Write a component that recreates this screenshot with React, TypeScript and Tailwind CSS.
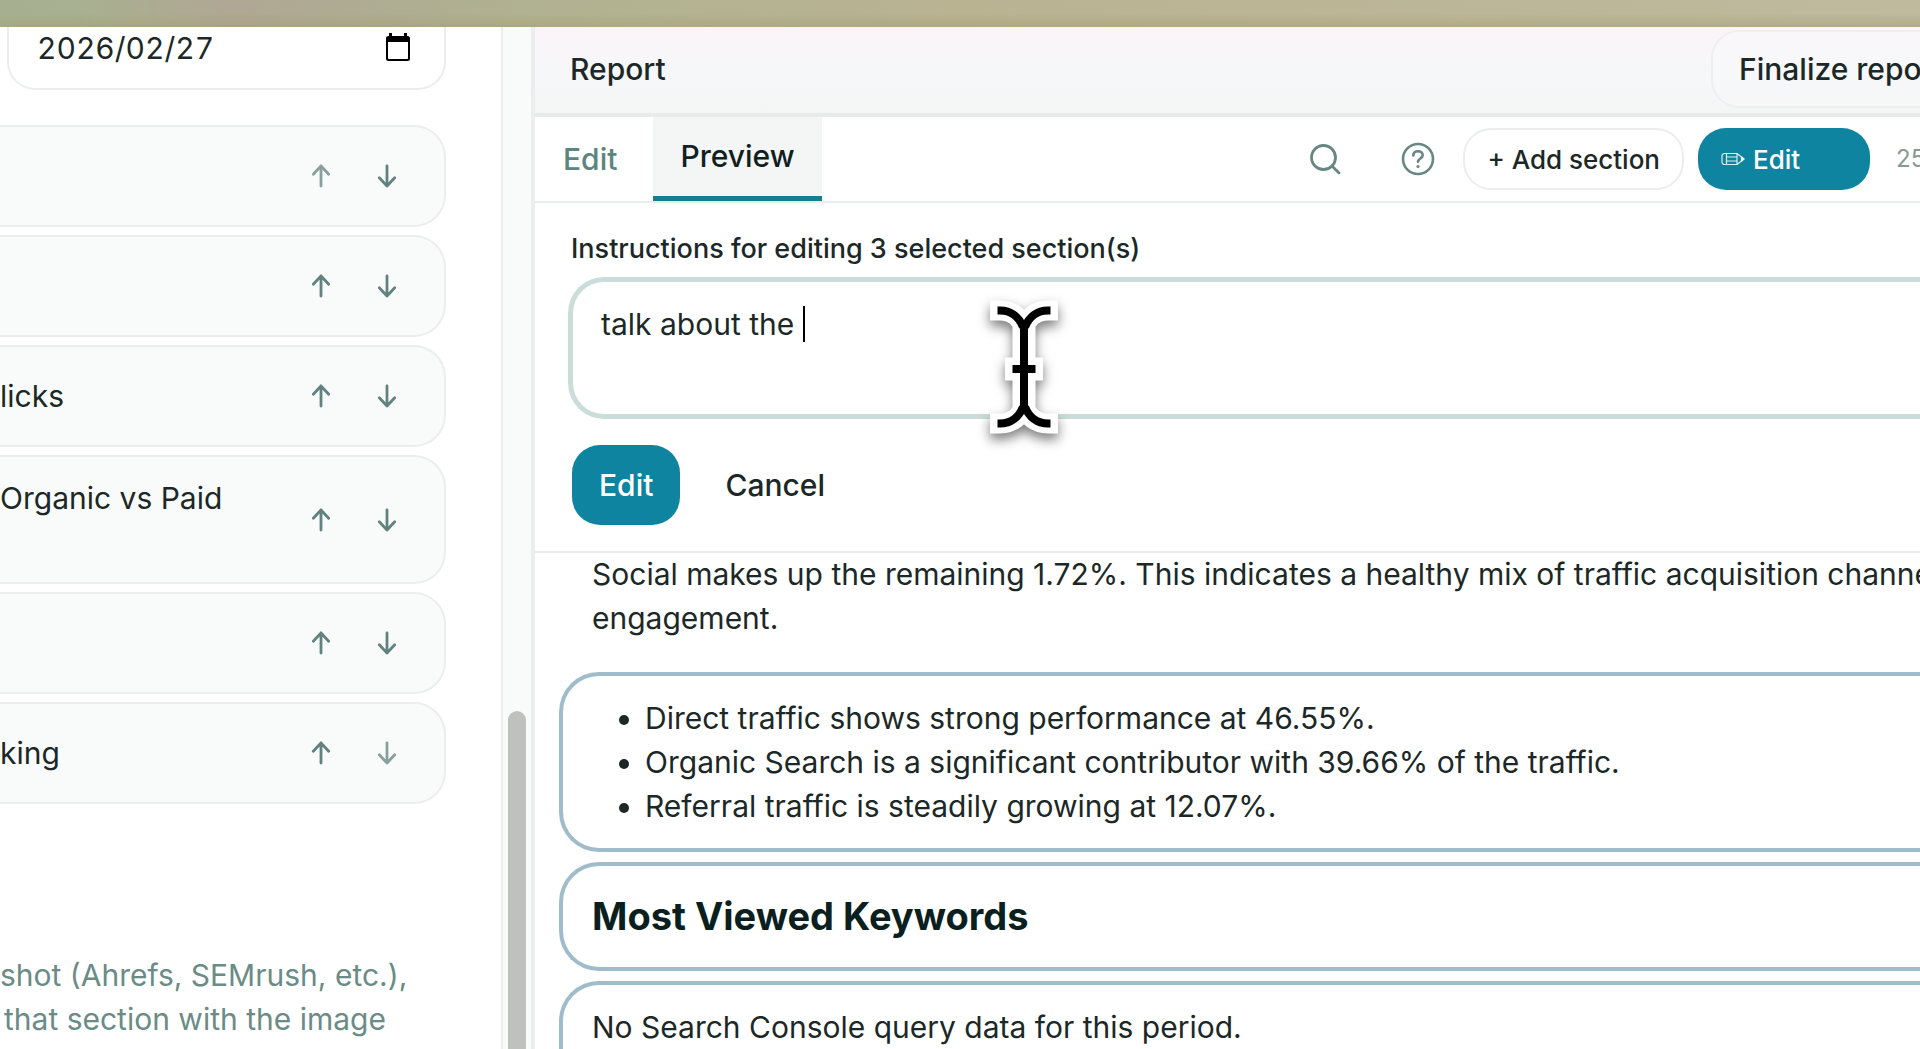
import { useState } from "react";
import clsx from "clsx";

const sections = [
  { id: 1, title: "", tall: false, upDisabled: true, downDisabled: false },
  { id: 2, title: "", tall: false, upDisabled: false, downDisabled: false },
  { id: 3, title: "licks", tall: false, upDisabled: false, downDisabled: false },
  { id: 4, title: "Organic vs Paid", tall: true, upDisabled: false, downDisabled: false },
  { id: 5, title: "", tall: false, upDisabled: false, downDisabled: false },
  { id: 6, title: "king", tall: false, upDisabled: false, downDisabled: true },
];

const highlights = [
  "Direct traffic shows strong performance at 46.55%.",
  "Organic Search is a significant contributor with 39.66% of the traffic.",
  "Referral traffic is steadily growing at 12.07%.",
];

const ArrowIcon = ({ down }: { down?: boolean }) => (
  <svg
    viewBox="0 0 20 24"
    fill="none"
    stroke="currentColor"
    strokeWidth="2.8"
    strokeLinecap="round"
    strokeLinejoin="round"
    className={clsx("h-6 w-5", down && "rotate-180")}
  >
    <path d="M10 22V2M2.3 10.200 10 2l7.700 8.200" />
  </svg>
);

const CalendarIcon = () => (
  <svg viewBox="0 0 24 28" className="h-7 w-6" fill="currentColor">
    <path
      fillRule="evenodd"
      d="M3 0h3v3h12V0h3v3h.5A2.500 2.500 0 0 1 24 5.500v20A2.500 2.500 0 0 1 21.500 28h-19A2.500 2.500 0 0 1 0 25.500v-20A2.500 2.500 0 0 1 2.500 3H3zM2 9v16.200a.8.8 0 0 0 .8.8h18.400a.8.8 0 0 0 .8-.8V9z"
    />
  </svg>
);

const SearchIcon = () => (
  <svg viewBox="0 0 32 32" className="size-8" fill="none" stroke="currentColor" strokeWidth="2.800" strokeLinecap="round">
    <circle cx="14.500" cy="14.500" r="12" />
    <path d="m23 23 7 7" />
  </svg>
);

const HelpIcon = () => (
  <svg viewBox="0 0 34 34" className="h-[34px] w-[34px]" fill="none" stroke="currentColor" strokeWidth="2.600" strokeLinecap="round">
    <circle cx="17" cy="17" r="15" />
    <path d="M12.300 13.500c0-2.700 2-4.300 4.700-4.300s4.700 1.600 4.700 4c0 3.300-4.700 3.300-4.700 6.600" />
    <circle cx="17" cy="24.500" r="1.600" fill="currentColor" stroke="none" />
  </svg>
);

const PencilIcon = () => (
  <svg viewBox="0 0 24 14" className="h-[14px] w-6" fill="none" stroke="currentColor" strokeOpacity="0.85" strokeWidth="1.200" strokeLinejoin="round">
    <path d="M3.500 1.500H16L23 7l-7 5.500H3.500A2.500 2.500 0 0 1 1 10V4a2.500 2.500 0 0 1 2.500-2.500zM5.500 1.500v11M16 1.500v11M5.500 5H16M5.500 9H16" />
    <path d="m20.500 5 2.500 2-2.500 2z" fill="currentColor" />
  </svg>
);

const TextCursor = () => (
  <svg
    viewBox="0 0 70 136"
    className="pointer-events-none absolute left-[421px] top-6 h-[136px] w-[70px] overflow-visible drop-shadow-[0_6px_6px_rgba(0,0,0,0.5)]"
  >
    <g fill="none">
      <path
        stroke="#fff"
        strokeWidth="20"
        d="M1 9.500h10C23 9.500 33 17 35 28c2-11 12-18.500 24-18.500h10M1 122.500h10c12 0 22-7.500 24-18.500 2 11 12 18.500 24 18.500h10"
      />
      <path stroke="#fff" strokeWidth="23" d="M35 22v86M16 68h38" />
      <path
        stroke="#000"
        strokeWidth="8"
        d="M8.500 9.500H11C22 9.500 30 16 34 26M61.500 9.500H59C48 9.500 40 16 36 26M8.500 122.500H11c11 0 19-6.500 23-16.500M61.500 122.500H59c-11 0-19-6.500-23-16.500"
      />
      <path stroke="#000" strokeWidth="8" d="M35 21v90M23.500 68h23" />
    </g>
  </svg>
);

const Sidebar = () => (
  <aside className="flex w-[501px] shrink-0 flex-col overflow-hidden bg-[#fefffe]">
    <div className="ml-[7px] mr-[55px] flex h-[63px] shrink-0 items-start justify-between rounded-b-[28px] border-2 border-t-0 border-[#ebeeed] pl-7 pr-[34px]">
      <input
        type="text"
        aria-label="End date"
        defaultValue="2026/02/27"
        className="h-[42px] w-[220px] bg-transparent tabular-nums outline-none"
      />
      <button type="button" aria-label="Open calendar" className="mt-[6px] text-black">
        <CalendarIcon />
      </button>
    </div>

    <ul className="mr-[55px] mt-[35px] flex flex-col gap-2">
      {sections.map((section) => (
        <li
          key={section.id}
          className={clsx(
            "flex items-center justify-between rounded-r-[32px] border-2 border-l-0 border-[#ebeeed] bg-[#f9fbfa] pr-[47px]",
            section.tall ? "h-[129px]" : "h-[102px]"
          )}
        >
          <span className={clsx("leading-[44px]", section.tall && "h-[88px]")}>{section.title}</span>
          <div className="flex gap-[46px] text-[#62827f]">
            <button type="button" aria-label="Move up" className={clsx(section.upDisabled && "opacity-75")}>
              <ArrowIcon />
            </button>
            <button type="button" aria-label="Move down" className={clsx(section.downDisabled && "opacity-75")}>
              <ArrowIcon down />
            </button>
          </div>
        </li>
      ))}
    </ul>

    <p className="mt-[149px] whitespace-nowrap leading-[44px] text-[#6b8b87]">
      shot (Ahrefs, SEMrush, etc.),
      <br />
      <span className="pl-1">that section with the image</span>
    </p>
  </aside>
);

const Toolbar = () => {
  const [tab, setTab] = useState("Preview");

  return (
    <nav className="flex h-[86px] shrink-0 items-stretch justify-between border-b-2 border-[#e9edeb]">
      <div className="flex">
        {["Edit", "Preview"].map((name) => (
          <button
            key={name}
            type="button"
            onClick={() => setTab(name)}
            className={clsx(
              "font-medium",
              tab === name ? "border-b-[5px] border-[#15808b] bg-[#f4f6f6] px-[27px] text-[#10201f]" : "pl-7 pr-9 text-[#5d8580]"
            )}
          >
            {name}
          </button>
        ))}
      </div>

      <div className="flex items-center text-[26px] font-medium">
        <button type="button" aria-label="Search" className="mr-[60px] text-[#688783]">
          <SearchIcon />
        </button>
        <button type="button" aria-label="Help" className="mr-7 text-[#688783]">
          <HelpIcon />
        </button>
        <button type="button" className="mr-[14px] h-[62px] rounded-[28px] border-2 border-[#ebeeed] px-[22px]">
          + Add section
        </button>
        <button type="button" className="mr-[26px] flex h-[62px] w-[172px] items-center gap-2 rounded-[28px] bg-[#0e84a0] pl-[23px] text-white">
          <PencilIcon />
          Edit
        </button>
        <span className="w-6 text-[24px] font-normal text-[#8b9896]">25</span>
      </div>
    </nav>
  );
};

const EditInstructions = () => (
  <section className="flex shrink-0 flex-col border-b-2 border-[#eceeed] pb-[26px] pt-7">
    <label htmlFor="instructions" className="pl-9 text-[27px] font-medium leading-9">
      Instructions for editing 3 selected section(s)
    </label>
    <div className="relative ml-[33px] mt-[10px] flex">
      <textarea
        id="instructions"
        defaultValue="talk about the "
        className="h-[142px] flex-1 resize-none rounded-l-[36px] border-[5px] border-r-0 border-[#cbddd8] bg-white pl-7 pt-5 leading-[44px] outline-none"
      />
      <span className="absolute left-[235px] top-[29px] h-9 w-[2px] bg-black" />
      <TextCursor />
    </div>
    <div className="ml-[37px] mt-[26px] flex items-center font-medium">
      <button type="button" className="h-20 rounded-[28px] bg-[#0e84a0] px-[27px] text-white">
        Edit
      </button>
      <button type="button" className="h-20 px-[45px]">
        Cancel
      </button>
    </div>
  </section>
);

const Report = () => (
  <article className="flex min-h-0 flex-1 flex-col overflow-hidden">
    <p className="shrink-0 whitespace-nowrap pl-[57px] leading-[42px]">
      Social makes up the remaining 1.72%. This indicates a healthy mix of traffic acquisition channe
    </p>
    <p className="shrink-0 pl-[57px] leading-[46px]">engagement.</p>
    <div className="ml-6 mt-[31px] flex flex-col gap-[10px]">
      <div className="rounded-l-[40px] border-4 border-r-0 border-[#a0bccb] bg-white py-5 pl-[29px]">
        <ul className="list-disc pl-[53px] leading-[44px]">
          {highlights.map((text) => (
            <li key={text}>{text}</li>
          ))}
        </ul>
      </div>
      <div className="flex h-[109px] items-center rounded-l-[40px] border-4 border-r-0 border-[#a0bccb] bg-white pl-[29px]">
        <h2 className="text-[38px] font-bold text-[#0b1f20]">Most Viewed Keywords</h2>
      </div>
      <div className="h-[109px] rounded-l-[40px] border-4 border-r-0 border-[#a0bccb] bg-white pl-[29px] pt-5 leading-[44px]">
        No Search Console query data for this period.
      </div>
    </div>
  </article>
);

export default function App() {
  return (
    <div className="flex h-screen flex-col overflow-hidden bg-[#fefffe] font-[Inter,sans-serif] text-[30px] text-[#1c2827]">
      <div className="h-[27px] shrink-0 bg-linear-to-r from-[#a6b090] via-[#b9b392] to-[#bfb99e]">
        <div className="h-full bg-linear-to-r from-transparent from-4% via-[#b0a794] via-12% to-transparent to-27%">
          <div className="h-full bg-linear-to-b from-transparent via-transparent to-[#a3a070]/50" />
        </div>
      </div>

      <div className="flex min-h-0 flex-1">
        <Sidebar />

        {/* scroll gutter */}
        <div className="flex w-[34px] shrink-0 flex-col items-center border-l-2 border-r-4 border-[#eceeed] bg-[#f9fbfa]">
          <div className="mt-[684px] w-[18px] flex-1 rounded-t-full bg-[#bfc1bf]" />
        </div>

        <main className="flex min-w-0 flex-1 flex-col overflow-hidden">
          <header className="flex h-[90px] shrink-0 items-center justify-between border-b-4 border-[#e7ebe9] bg-linear-to-b from-[#fbf4f9] via-[#f6f7f9] to-[#f4f6f5] pb-[2px] pl-[35px]">
            <h1 className="font-medium">Report</h1>
            <button
              type="button"
              className="h-[78px] w-[209px] overflow-hidden whitespace-nowrap rounded-l-[28px] border-2 border-r-0 border-[#eeeff0] bg-[#f8f8fa]/60 pl-[26px] text-left font-medium"
            >
              Finalize repo
            </button>
          </header>
          <Toolbar />
          <EditInstructions />
          <Report />
        </main>
      </div>
    </div>
  );
}
